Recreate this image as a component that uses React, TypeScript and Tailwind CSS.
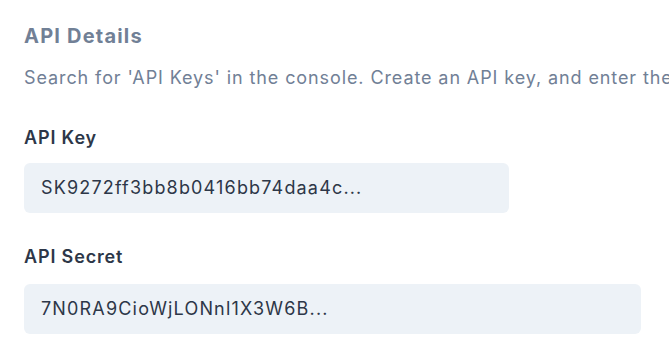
export default function App() {
  return (
    <div className="w-full h-[362px] overflow-hidden bg-white px-6 pt-[22px] font-['Inter',sans-serif]">
      <h2 className="text-xl leading-7 font-bold tracking-[0.06em] text-[#718096]">API Details</h2>
      <p className="mt-4 text-lg leading-6 tracking-[0.05em] text-[#718096] whitespace-nowrap">
        Search for 'API Keys' in the console. Create an API key, and enter the details below.
      </p>

      {/* key */}
      <div className="mt-[34px]">
        <label className="block text-lg leading-7 font-semibold tracking-[0.047em] text-[#2d3748]">API Key</label>
        <div className="mt-[11px] w-[485px] h-[50px] rounded-md bg-[#edf2f7] px-[17px] flex items-center text-lg tracking-[0.065em] text-[#2d3748]">
          SK9272ff3bb8b0416bb74daa4c...
        </div>
      </div>

      {/* secret */}
      <div className="mt-[30px]">
        <label className="block text-lg leading-7 font-semibold tracking-[0.047em] text-[#2d3748]">API Secret</label>
        <div className="mt-[13px] w-[617px] h-[50px] rounded-md bg-[#edf2f7] px-[17px] flex items-center text-lg tracking-[0.065em] text-[#2d3748]">
          7N0RA9CioWjLONnl1X3W6B...
        </div>
      </div>
    </div>
  );
}
